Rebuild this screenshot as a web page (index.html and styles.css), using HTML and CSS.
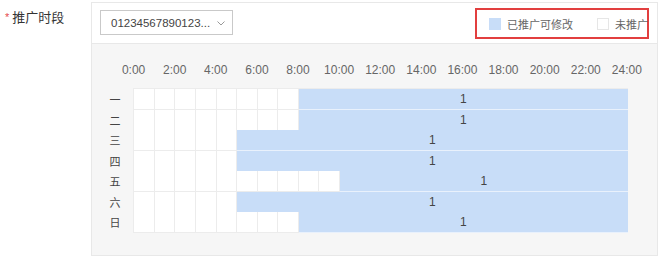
FILE: index.html
```html
<!DOCTYPE html>
<html lang="zh">
<head>
<meta charset="utf-8">
<link rel="stylesheet" href="styles.css">
</head>
<body>
<div class="page">
  <div class="label"><span class="req">*</span>推广时段</div>
  <div class="panel">
    <div class="header">
      <div class="select">
        <span class="select-text">01234567890123...</span>
        <svg class="chev" width="8" height="5" viewBox="0 0 8 5"><path d="M0.5 0.5 L4 4 L7.5 0.5" fill="none" stroke="#999" stroke-width="1"/></svg>
      </div>
      <div class="legend">
        <span class="sw sw-blue"></span><span class="lg-text">已推广可修改</span>
        <span class="sw sw-white"></span><span class="lg-text">未推广</span>
      </div>
    </div>
    <div class="body">
      <div class="times">
        <span>0:00</span><span>2:00</span><span>4:00</span><span>6:00</span><span>8:00</span><span>10:00</span><span>12:00</span><span>14:00</span><span>16:00</span><span>18:00</span><span>20:00</span><span>22:00</span><span>24:00</span>
      </div>
      <div class="table">
        <div class="days">
          <div class="day">一</div><div class="day">二</div><div class="day">三</div><div class="day">四</div><div class="day">五</div><div class="day">六</div><div class="day">日</div>
        </div>
        <div class="grid" id="grid"></div>
      </div>
    </div>
  </div>
</div>
<script src="app.js"></script>
</body>
</html>
```

FILE: app.js
```js
var starts = [8, 8, 5, 5, 10, 5, 8];
var grid = document.getElementById('grid');
starts.forEach(function (s) {
  var row = document.createElement('div');
  row.className = 'row';
  for (var i = 0; i < s; i++) {
    var c = document.createElement('div');
    c.className = 'cell';
    row.appendChild(c);
  }
  var b = document.createElement('div');
  b.className = 'span';
  b.style.gridColumn = (s + 1) + ' / 25';
  b.textContent = '1';
  row.appendChild(b);
  grid.appendChild(row);
});
```

FILE: styles.css
```css
html, body {
  margin: 0;
  padding: 0;
  background: #fff;
}
body {
  font-family: "Liberation Sans", "Noto Sans CJK SC", sans-serif;
  color: #333;
}
.page {
  display: flex;
  padding-top: 2px;
}
.label {
  width: 91px;
  box-sizing: border-box;
  padding-left: 5px;
  padding-top: 7px;
  font-size: 13px;
  line-height: 16px;
  font-family: "Noto Sans CJK SC", sans-serif;
  color: #333;
}
.req {
  color: #e5484d;
  font-size: 11px;
  margin-right: 3px;
  vertical-align: 1px;
  font-family: "Liberation Sans", sans-serif;
}
.panel {
  width: 567px;
  height: 254px;
  box-sizing: border-box;
  border: 1px solid #e8e8e8;
  display: flex;
  flex-direction: column;
}
.header {
  height: 41px;
  box-sizing: border-box;
  border-bottom: 1px solid #e8e8e8;
  display: flex;
  justify-content: space-between;
  align-items: flex-start;
  padding: 0 8px 0 8px;
  background: #fff;
}
.select {
  margin-top: 7px;
  width: 133px;
  height: 25px;
  box-sizing: border-box;
  border: 1px solid #c9c9c9;
  display: flex;
  align-items: center;
  padding-left: 10px;
  font-size: 11.5px;
  color: #444;
}
.select-text {
  width: 106px;
}
.chev {
  display: block;
  margin-top: 1px;
}
.legend {
  margin-top: 5px;
  height: 31px;
  box-sizing: border-box;
  border: 2px solid #e23f3f;
  display: flex;
  align-items: center;
  padding-left: 12px;
  width: 174px;
  font-family: "Noto Sans CJK SC", sans-serif;
  font-size: 11px;
  color: #666;
}
.sw {
  width: 12px;
  height: 12px;
  box-sizing: border-box;
  margin-right: 6px;
  flex: none;
}
.sw-blue {
  background: #c8ddf8;
}
.sw-white {
  background: #fff;
  border: 1px solid #e6e6e6;
  margin-left: 24px;
}
.lg-text {
  white-space: nowrap;
}
.body {
  flex: 1;
  background: #f6f6f6;
  padding-top: 18px;
}
.times {
  display: flex;
  margin-left: 21px;
  height: 16px;
  line-height: 16px;
  margin-bottom: 10px;
  font-size: 12px;
  color: #666;
}
.times span {
  width: 41.12px;
  flex: none;
  text-align: center;
}
.table {
  display: flex;
}
.days {
  width: 41.33px;
  box-sizing: border-box;
  padding-left: 4.7px;
  padding-top: 1px;
  font-family: "Noto Sans CJK SC", sans-serif;
  font-size: 11px;
  color: #444;
}
.day {
  height: 20.57px;
  line-height: 20.57px;
  text-align: center;
}
.grid {
  width: 494.4px;
  box-sizing: border-box;
  border-left: 1px solid #ececec;
  border-top: 1px solid #ececec;
}
.row {
  display: grid;
  grid-template-columns: repeat(24, 1fr);
  height: 20.57px;
}
.cell {
  background: #fff;
  box-sizing: border-box;
  border-right: 1px solid #ececec;
  border-bottom: 1px solid #ececec;
}
.span {
  background: #c8ddf8;
  box-sizing: border-box;
  border-bottom: 1px solid #e9f1fc;
  text-align: center;
  font-size: 12px;
  line-height: 20px;
  color: #444;
}
```
